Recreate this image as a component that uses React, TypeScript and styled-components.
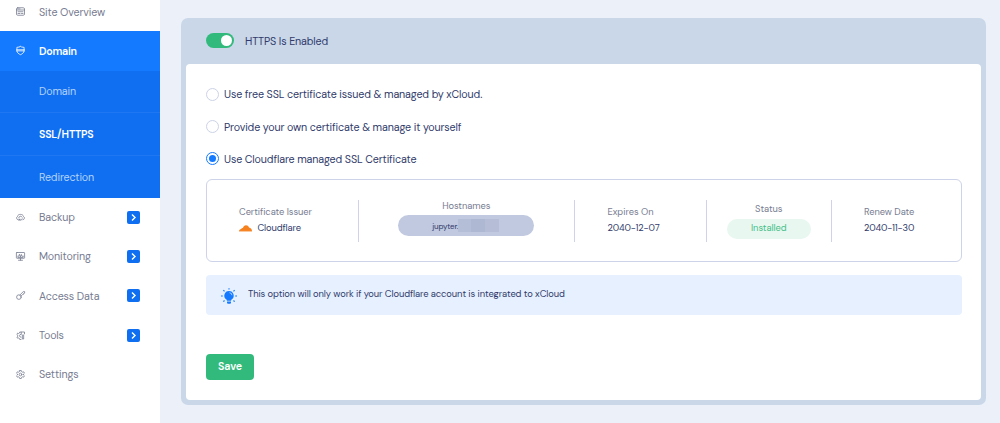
import React from "react";
import styled, { createGlobalStyle, css } from "styled-components";

const Global = createGlobalStyle`
  * { box-sizing: border-box; }
  body { margin: 0; background: #ecf0f9; font-family: "DM Sans", Inter, "Open Sans", sans-serif; font-variation-settings: "opsz" 14; color: #313b6b; overflow: hidden; }
`;

const Page = styled.div`
  display: flex;
  height: 423px;
  background: #ecf0f9;
  overflow: hidden;
`;

const Sidebar = styled.nav`
  width: 160px;
  flex: none;
  background: #fff;
  display: flex;
  flex-direction: column;
`;

const Label = styled.span<{ $ls?: number }>`
  white-space: nowrap;
  letter-spacing: ${(p) => p.$ls ?? -0.12}px;
`;

const NavRow = styled.a<{ $h: number; $active?: boolean; $up?: number }>`
  height: ${(p) => p.$h}px;
  flex: none;
  display: flex;
  align-items: center;
  padding: 0 20px 0 16px;
  padding-bottom: ${(p) => p.$up ?? 1}px;
  font-size: 10.7px;
  color: #777c91;
  svg.icon { width: 9px; height: 9px; margin-right: 14px; flex: none; overflow: visible; }
  ${(p) =>
    p.$active &&
    css`
      background: #147aff;
      color: #fff;
      font-weight: 600;
    `}
`;

const SubMenu = styled.div`
  background: #106ff0;
  height: 127px;
  flex: none;
`;

const SubRow = styled.a<{ $h: number; $current?: boolean }>`
  display: flex;
  align-items: center;
  height: ${(p) => p.$h}px;
  padding: 0 0 1px 39px;
  font-size: 10.7px;
  color: ${(p) => (p.$current ? "#fff" : "#b3d3fc")};
  font-weight: ${(p) => (p.$current ? 600 : 400)};
  & + & { border-top: 1px solid #1f78f2; }
`;

const Expand = styled.span`
  margin-left: auto;
  width: 13px;
  height: 13px;
  border-radius: 2px;
  background: #106ff0;
  display: grid;
  place-items: center;
`;

const Main = styled.main`
  flex: 1;
  padding: 17.5px 14.5px 18px 21px;
`;

const Panel = styled.section`
  height: 387.5px;
  border-radius: 7px;
  background: #c9d7e9;
  padding: 0 5px 5px;
  display: flex;
  flex-direction: column;
`;

const PanelHead = styled.header`
  height: 46px;
  flex: none;
  display: flex;
  align-items: center;
  gap: 11px;
  padding-left: 20px;
  font-size: 10.7px;
`;

const Toggle = styled.span`
  width: 28px;
  height: 15px;
  border-radius: 8px;
  background: #32ba7c;
  display: flex;
  align-items: center;
  justify-content: flex-end;
  padding: 2px;
  &::after { content: ""; width: 11px; height: 11px; border-radius: 50%; background: #fff; }
`;

const Body = styled.div`
  flex: 1;
  background: #fff;
  border-radius: 4px;
  padding: 14.6px 19px 0 20px;
`;

const Option = styled.label`
  display: flex;
  align-items: center;
  height: 32.3px;
  gap: 5px;
  font-size: 10.7px;
`;

const Radio = styled.span<{ $on?: boolean }>`
  width: 13px;
  height: 13px;
  border-radius: 50%;
  border: 1px solid ${(p) => (p.$on ? "#147aff" : "#ccd3e6")};
  display: grid;
  place-items: center;
  &::after {
    content: "";
    width: 7px;
    height: 7px;
    border-radius: 50%;
    background: ${(p) => (p.$on ? "#147aff" : "transparent")};
  }
`;

const Certificate = styled.div`
  margin-top: 4.3px;
  height: 83px;
  border: 1px solid #cdd3e8;
  border-radius: 6px;
  display: flex;
  align-items: center;
`;

const Cell = styled.div<{ $w: number; $center?: boolean; $pad?: number; $up?: number; $gap?: number }>`
  width: ${(p) => p.$w}px;
  height: 42px;
  flex: none;
  display: flex;
  flex-direction: column;
  justify-content: center;
  align-items: ${(p) => (p.$center ? "center" : "flex-start")};
  padding: 0 0 ${(p) => p.$up ?? 1}px ${(p) => p.$pad ?? 0}px;
  gap: ${(p) => p.$gap ?? 4}px;
  & + & { border-left: 1px solid #cdd3e8; }
`;

const Caption = styled.div`
  font-size: 9.3px;
  line-height: 12px;
  color: #777c91;
`;

const Value = styled.div`
  font-size: 9.4px;
  line-height: 12px;
  display: flex;
  align-items: center;
  gap: 5.5px;
`;

const HostPill = styled.div`
  width: 136px;
  height: 21px;
  border-radius: 11px;
  background: #c0c9df;
  display: flex;
  align-items: center;
  padding-left: 34px;
  font-size: 8px;
`;

const Redacted = styled.span`
  display: flex;
  width: 41px;
  height: 13px;
  background: linear-gradient(90deg, #b5bed7 0 13px, #afb8d2 13px 27px, #b5bed6 27px);
`;

const StatusPill = styled.div`
  width: 84px;
  height: 20px;
  border-radius: 10px;
  background: #e8f7f0;
  color: #46bf88;
  display: grid;
  place-items: center;
  padding-bottom: 1px;
  font-size: 9.3px;
`;

const Notice = styled.div`
  margin-top: 13px;
  height: 40px;
  border-radius: 4px;
  background: #e6f0ff;
  display: flex;
  align-items: center;
  gap: 11px;
  padding: 0 0 2px 15px;
  font-size: 9.4px;
  svg { position: relative; top: 1.5px; }
`;

const Save = styled.button`
  display: block;
  margin-top: 38.7px;
  width: 48px;
  height: 26px;
  border: 0;
  border-radius: 4px;
  background: #32ba7c;
  color: #fff;
  font: 600 10.7px "DM Sans", Inter, sans-serif;
  font-variation-settings: "opsz" 14;
  padding: 0 0 1px;
`;

type IconName = "overview" | "shield" | "backup" | "monitor" | "key" | "tools" | "gear";

const shapes: Record<IconName, React.ReactNode> = {
  overview: (
    <>
      <rect x="1" y="1.5" width="16" height="15" rx="2.5" />
      <path d="M1 6h16M4 9.5h10M4 13h4M11 13h3M4 3.8h1M7 3.8h1" />
    </>
  ),
  shield: (
    <>
      <path d="M9 .5 11.2 2l5 .7v6.8c0 4-4.2 6.6-7.2 7.9-3-1.3-7.2-3.900-7.200-7.900V2.700l5-.7z" />
      <path d="M.5 6h17v5H.5z" fill="currentColor" stroke="none" opacity=".6" />
    </>
  ),
  backup: (
    <>
      <path d="M4 13.500A3.500 3.500 0 0 1 3 7C3.500 3.800 6 2.800 8.800 2.800S14.500 4 15 7a3.500 3.500 0 0 1-1 6.500" />
      <path d="M5.500 9.500A3.600 3.600 0 0 1 12.300 8.500M12.500 11.500A3.600 3.600 0 0 1 5.800 12.500M6 15v-2.500h2.400" />
    </>
  ),
  monitor: (
    <>
      <rect x=".8" y="1" width="16.4" height="11.5" rx="1" />
      <path d="M9 12.5v3.7M5 16.5h8M3.5 8.5h2l1.3-4 2 5.3 1.8-5 1.2 3.7H15M4 10.8h10" />
    </>
  ),
  key: (
    <>
      <circle cx="5.8" cy="12.2" r="4.6" />
      <path d="m7.8 8 6.8-6.8h2.7v3.1l-2 .5-.4 2-2 .4-2.800 3" />
    </>
  ),
  tools: (
    <>
      <path d="M10 2H7.500L7 4 5 5 3.200 4.300 1.800 7 3.500 8.500v2L1.800 12l1.400 2.500L5 14l2 1 .5 2H10" />
      <path d="M10 6.500a3 3 0 0 0 0 6M11 2h6v4l-1.700 1.500V16h-2.600V7.500L11 6z" />
    </>
  ),
  gear: (
    <>
      <path d="M7.4 1h3.2l.6 2.3 1.7 1 2.3-.7 1.6 2.8-1.700 1.600v2l1.700 1.600-1.600 2.800-2.300-.7-1.700 1-.6 2.300H7.400l-.6-2.300-1.700-1-2.300.7-1.600-2.800L2.900 10V8L1.200 6.400l1.600-2.800 2.300.7 1.700-1z" />
      <circle cx="9" cy="9" r="2.700" />
    </>
  ),
};

const Icon = ({ name }: { name: IconName }) => (
  <svg className="icon" viewBox="0 0 18 18" fill="none" stroke="currentColor" strokeWidth="1.6" strokeLinejoin="round" strokeLinecap="round">
    {shapes[name]}
  </svg>
);

const Chevron = () => (
  <Expand>
    <svg width="5" height="7" viewBox="0 0 5 7" fill="none" stroke="#fff" strokeWidth="1.4">
      <path d="M1 .6 4 3.500 1 6.400" />
    </svg>
  </Expand>
);

const CloudLogo = () => (
  <svg width="13" height="7" viewBox="0 0 13 7">
    <path d="M0 6C.2 4.900 1 4.300 2.200 4c.2-.8 1-1.200 1.700-.9C4.500 1.300 5.600.3 7 .3c1.400 0 2.500.8 3 2.200C11.800 2.700 13 4.200 13 6z" fill="#f6821f" />
    <path d="M0 6.400h13" stroke="#f8b27a" strokeWidth=".8" />
  </svg>
);

const Bulb = () => (
  <svg width="16" height="16" viewBox="0 0 16 16">
    <path d="M8 3a4.700 4.700 0 0 0-2.600 8.600c.4.300.5.700.5 1.100h4.200c0-.4.1-.8.5-1.100A4.700 4.700 0 0 0 8 3z" fill="#147aff" />
    <path d="M6 13.500h4v.9c0 .8-.6 1.300-1.300 1.300H7.300c-.7 0-1.300-.5-1.300-1.300z" fill="#147aff" />
    <path d="M8 .2v1.300M2.400 2.200l1.100 1.100M13.600 2.200l-1.100 1.100M0 8h1.800M16 8h-1.800M2.400 13.600l1.100-1.100M13.600 13.600l-1.100-1.100" stroke="#147aff" strokeWidth="1.200" />
    <path d="M8.500 4.700a2.600 2.600 0 0 1 2.400 2.500" stroke="#cfe2ff" strokeWidth=".8" fill="none" />
  </svg>
);

const items: { icon: IconName; text: string; more: boolean }[] = [
  { icon: "backup", text: "Backup", more: true },
  { icon: "monitor", text: "Monitoring", more: true },
  { icon: "key", text: "Access Data", more: true },
  { icon: "tools", text: "Tools", more: true },
  { icon: "gear", text: "Settings", more: false },
];

export default function App() {
  return (
    <Page>
      <Global />
      <Sidebar>
        <NavRow $h={31} $up={8}><Icon name="overview" /><Label>Site Overview</Label></NavRow>
        <NavRow $h={40} $active><Icon name="shield" /><Label $ls={-0.25}>Domain</Label></NavRow>
        <SubMenu>
          <SubRow $h={41}><Label>Domain</Label></SubRow>
          <SubRow $h={43} $current><Label $ls={-0.25}>SSL/HTTPS</Label></SubRow>
          <SubRow $h={43}><Label>Redirection</Label></SubRow>
        </SubMenu>
        {items.map((i) => (
          <NavRow key={i.text} $h={39.3}>
            <Icon name={i.icon} />
            <Label>{i.text}</Label>
            {i.more && <Chevron />}
          </NavRow>
        ))}
      </Sidebar>
      <Main>
        <Panel>
          <PanelHead><Toggle /><Label>HTTPS Is Enabled</Label></PanelHead>
          <Body>
            <Option><Radio /><Label>Use free SSL certificate issued &amp; managed by xCloud.</Label></Option>
            <Option><Radio /><Label>Provide your own certificate &amp; manage it yourself</Label></Option>
            <Option><Radio $on /><Label>Use Cloudflare managed SSL Certificate</Label></Option>
            <Certificate>
              <Cell $w={151} $pad={32}>
                <Caption><Label $ls={-0.04}>Certificate Issuer</Label></Caption>
                <Value><CloudLogo /><Label>Cloudflare</Label></Value>
              </Cell>
              <Cell $w={215.5} $center $up={5} $gap={3}>
                <Caption><Label $ls={-0.04}>Hostnames</Label></Caption>
                <HostPill><Label $ls={-0.18}>jupyter.</Label><Redacted /></HostPill>
              </Cell>
              <Cell $w={132.5} $pad={33}>
                <Caption><Label $ls={0}>Expires On</Label></Caption>
                <Value><Label $ls={-0.16}>2040-12-07</Label></Value>
              </Cell>
              <Cell $w={124.5} $center $up={0}>
                <Caption><Label $ls={-0.04}>Status</Label></Caption>
                <StatusPill><Label $ls={-0.04}>Installed</Label></StatusPill>
              </Cell>
              <Cell $w={129} $pad={32.500}>
                <Caption><Label $ls={-0.04}>Renew Date</Label></Caption>
                <Value><Label $ls={-0.16}>2040-11-30</Label></Value>
              </Cell>
            </Certificate>
            <Notice><Bulb /><Label $ls={-0.1}>This option will only work if your Cloudflare account is integrated to xCloud</Label></Notice>
            <Save><Label>Save</Label></Save>
          </Body>
        </Panel>
      </Main>
    </Page>
  );
}
